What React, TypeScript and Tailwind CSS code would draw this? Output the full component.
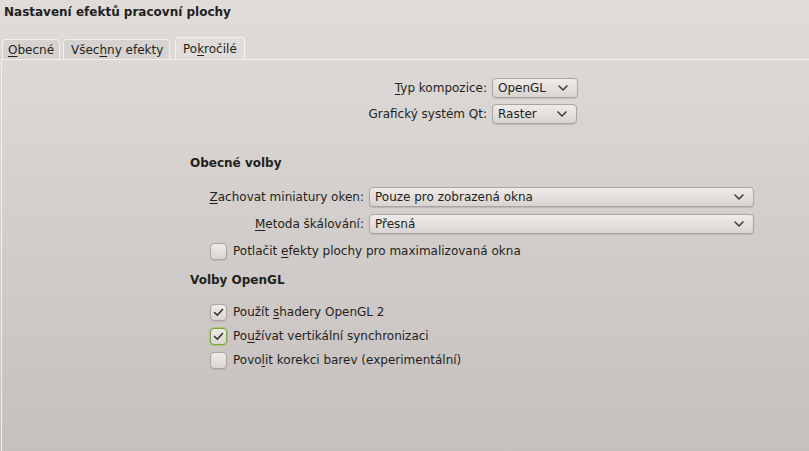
import React from "react";

const FONT = "font-['DejaVu_Sans','Liberation_Sans',sans-serif]";

function U({ children }: { children: React.ReactNode }) {
  return <span className="underline decoration-1 underline-offset-2">{children}</span>;
}

function Chevron() {
  return (
    <svg width="10" height="6" viewBox="0 0 10 6" className="shrink-0">
      <path d="M1 1 L5 5 L9 1" fill="none" stroke="#3b3836" strokeWidth="1.5" strokeLinecap="round" strokeLinejoin="round" />
    </svg>
  );
}

function Combo({ value, width }: { value: string; width: string }) {
  return (
    <div
      className={`${width} h-[20px] flex items-center justify-between pl-[5px] pr-[9px] rounded-[4px] border border-[#aaa5a1] bg-gradient-to-b from-[#eeebe9] to-[#d8d4d1] shadow-[0_1px_1px_rgba(0,0,0,0.12)]`}
    >
      <span className="leading-none">{value}</span>
      <Chevron />
    </div>
  );
}

function Check({ checked, focus, children }: { checked?: boolean; focus?: boolean; children: React.ReactNode }) {
  return (
    <div className="flex items-center h-[20px]">
      <div
        className={`w-[17px] h-[17px] rounded-[4px] flex items-center justify-center bg-gradient-to-b from-[#eeebe9] to-[#d9d5d2] shadow-[0_1px_1px_rgba(0,0,0,0.1)] border ${
          focus ? "border-[#7ea545] ring-1 ring-[#a6c86f]" : "border-[#aaa5a1]"
        }`}
      >
        {checked && (
          <svg width="11" height="9" viewBox="0 0 11 9">
            <path d="M1.5 4.5 L4.3 7.3 L9.5 1.5" fill="none" stroke="#36322f" strokeWidth="1.6" strokeLinecap="round" strokeLinejoin="round" />
          </svg>
        )}
      </div>
      <span className="ml-[6px]">{children}</span>
    </div>
  );
}

export default function App() {
  return (
    <div
      className={`${FONT} w-[809px] h-[451px] overflow-hidden flex flex-col text-[12px] text-[#231f1d] bg-gradient-to-b from-[#e0dcd9] to-[#c5c0bd]`}
    >
      {/* title */}
      <div className="h-[24px] pl-[4px] pt-[4px] font-bold leading-[16px]">Nastavení efektů pracovní plochy</div>

      {/* tabs */}
      <div className="mt-[13px] h-[22px] flex items-end pl-[2px]">
        <div className="h-[20px] w-[58px] mr-[3px] flex items-center pl-[5px] rounded-t-[4px] border border-b-0 border-[#f2f0ee] bg-[#d6d2cf]">
          <U>O</U>becné
        </div>
        <div className="h-[20px] w-[107px] mr-[5px] flex items-center pl-[7px] rounded-t-[4px] border border-b-0 border-[#f2f0ee] bg-[#d6d2cf]">
          Všec<U>h</U>ny efekty
        </div>
        <div className="h-[22px] w-[70px] flex items-center pl-[7px] rounded-t-[4px] border border-b-0 border-[#f4f2f0] bg-[#e0dcd9]">
          Po<U>k</U>ročilé
        </div>
      </div>

      {/* panel */}
      <div className="flex-1 ml-[1px] border-t border-l border-[#f2f0ee] flex flex-col">
        <div className="mt-[18px] flex items-center">
          <span className="w-[490px] pr-[5px] text-right">
            <U>T</U>yp kompozice:
          </span>
          <Combo value="OpenGL" width="w-[86px]" />
        </div>
        <div className="mt-[6px] flex items-center">
          <span className="w-[490px] pr-[5px] text-right">Grafický systém Qt:</span>
          <Combo value="Raster" width="w-[85px]" />
        </div>

        <div className="pl-[188px] mt-[30px] flex flex-col">
          <div className="h-[18px] leading-[18px] font-bold">Obecné volby</div>

          <div className="mt-[15px] flex items-center">
            <span className="w-[179px] pr-[5px] text-right">
              <U>Z</U>achovat miniatury oken:
            </span>
            <Combo value="Pouze pro zobrazená okna" width="w-[385px]" />
          </div>
          <div className="mt-[7px] flex items-center">
            <span className="w-[179px] pr-[5px] text-right">
              <U>M</U>etoda škálování:
            </span>
            <Combo value="Přesná" width="w-[385px]" />
          </div>
          <div className="mt-[7px] pl-[20px]">
            <Check>
              Potlačit <U>e</U>fekty plochy pro maximalizovaná okna
            </Check>
          </div>

          <div className="mt-[10px] h-[18px] leading-[18px] font-bold">Volby OpenGL</div>

          <div className="mt-[13px] pl-[20px] flex flex-col gap-[4px]">
            <Check checked>
              Použít <U>s</U>hadery OpenGL 2
            </Check>
            <Check checked focus>
              Po<U>u</U>žívat vertikální synchronizaci
            </Check>
            <Check>
              Povo<U>l</U>it korekci barev (experimentální)
            </Check>
          </div>
        </div>
      </div>
    </div>
  );
}
